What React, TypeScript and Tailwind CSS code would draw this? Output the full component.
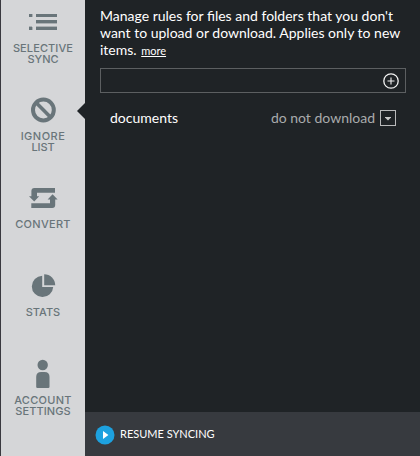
import type { ReactNode } from 'react';

type NavItem = {
  id: string;
  lines: { text: string; spacing: string }[];
  active?: boolean;
  icon: ReactNode;
};

const NAV_ITEMS: NavItem[] = [
  {
    id: 'selective',
    lines: [
      { text: 'SELECTIVE', spacing: 'tracking-[0.1px]' },
      { text: 'SYNC', spacing: 'tracking-[-0.1px]' },
    ],
    icon: (
      <>
        <path d="M29 14h3v3h-3zM36 14h21v3H36zM36 20h21v3H36zM29 27h3v3h-3zM36 27h21v3H36z" />
        <path d="M32 14h1v3h-1zM36 23h21v1H36zM29 26h3v1h-3zM36 26h21v1H36zM32 27h1v3h-1z" opacity="0.4" />
      </>
    ),
  },
  {
    id: 'ignore',
    active: true,
    lines: [
      { text: 'IGNORE', spacing: 'tracking-[0.5px]' },
      { text: 'LIST', spacing: 'tracking-[-0.1px]' },
    ],
    icon: (
      <g fill="none" stroke="currentColor" strokeWidth="4">
        <circle cx="43.4" cy="22" r="10.4" />
        <path d="M36.2 14.8l14.4 14.4" strokeWidth="3.6" />
      </g>
    ),
  },
  {
    id: 'convert',
    lines: [{ text: 'CONVERT', spacing: 'tracking-[0.3px]' }],
    icon: (
      <>
        <path d="M55 12v4.8H37v3.4h2.2L34.2 25.5 29 20.2h2.4V15q0-3 3-3z" />
        <path d="M31.3 32v-4.7H50v-3.7h-2.4l5-5.3 5 5.3h-2.4V29q0 3-3 3z" />
      </>
    ),
  },
  {
    id: 'stats',
    lines: [{ text: 'STATS', spacing: 'tracking-[0px]' }],
    icon: (
      <>
        <path d="M42.2 11.7A10.7 10.7 0 1 0 53.2 23H42.2z" />
        <path d="M44.2 10.2A11 11 0 0 1 55.2 21.2h-11z" />
      </>
    ),
  },
  {
    id: 'account',
    lines: [
      { text: 'ACCOUNT', spacing: 'tracking-[0.3px]' },
      { text: 'SETTINGS', spacing: 'tracking-[0.1px]' },
    ],
    icon: (
      <>
        <circle cx="42.7" cy="13" r="5.2" />
        <path d="M36.2 25q0-5 5-5h3.3q5 0 5 5v9.8q0 1.2-1.2 1.2H37.4q-1.2 0-1.2-1.2z" />
      </>
    ),
  },
];

function Sidebar() {
  return (
    <nav className="w-[85px] shrink-0 border-l border-[#39393f] bg-[#d5d6d8] text-[#69757a]">
      {NAV_ITEMS.map((item) => (
        <button key={item.id} className="relative flex h-[88px] w-full flex-col items-center">
          <svg className="mb-px shrink-0" width="84" height="42" viewBox="1 0 84 42" fill="currentColor">
            {item.icon}
          </svg>
          {item.lines.map((line) => (
            <span
              key={line.text}
              className={`font-['Inter','Liberation_Sans',sans-serif] text-[11px] leading-[11px] font-medium whitespace-nowrap ${line.spacing}`}
            >
              {line.text}
            </span>
          ))}
          {item.active && (
            <svg className="absolute top-[15px] right-0" width="8" height="16" viewBox="0 0 8 16" fill="#1f2326">
              <path d="M8 0v16L0 8z" />
            </svg>
          )}
        </button>
      ))}
    </nav>
  );
}

export default function App() {
  return (
    <div className="flex h-[456px] w-[420px] overflow-hidden bg-[#1f2326] font-['Lato',sans-serif] text-white">
      <Sidebar />

      <div className="flex min-w-0 flex-1 flex-col">
        <main className="flex-1 pt-[7px] pr-[14px] pl-[15px]">
          <p className="text-[14px] leading-[17px] whitespace-nowrap">
            Manage rules for files and folders that you don't
            <br />
            want to upload or download. Applies only to new
            <br />
            items. <a className="ml-px text-[11px] underline underline-offset-1">more</a>
          </p>

          {/* New rule input */}
          <div className="mt-[9px] flex h-[25px] items-center justify-end border border-[#5c5f61] pr-[6px]">
            <svg width="16" height="16" viewBox="0 0 16 16" fill="none" stroke="#f2f2f2">
              <circle cx="8" cy="8" r="7.2" strokeWidth="1.3" />
              <path d="M8 4.5v7M4.5 8h7" strokeWidth="1.1" />
            </svg>
          </div>

          {/* Rule row */}
          <div className="mt-[17px] flex h-4 items-center pr-[10px] pl-[10px] text-[14px] leading-4">
            <span>documents</span>
            <span className="ml-auto text-[#a9abac]">do not download</span>
            <span className="ml-[5px] flex size-4 items-center justify-center border border-[#b9babb]">
              <svg className="mt-px" width="6" height="4" viewBox="0 0 6 4" fill="#c9caca">
                <path d="M0 0h6v.6L3 3.6 0 .6z" />
              </svg>
            </span>
          </div>
        </main>

        <footer className="flex h-[44px] items-center bg-[#373a3f] pl-[10px]">
          <svg className="mt-[2px]" width="20" height="20" viewBox="0 0 20 20">
            <circle cx="10" cy="10" r="9.5" fill="#1da1df" />
            <path d="M8 6v8l5.4-4z" fill="#fff" />
          </svg>
          <span className="ml-[5px] text-[11px] leading-4">RESUME SYNCING</span>
        </footer>
      </div>
    </div>
  );
}
